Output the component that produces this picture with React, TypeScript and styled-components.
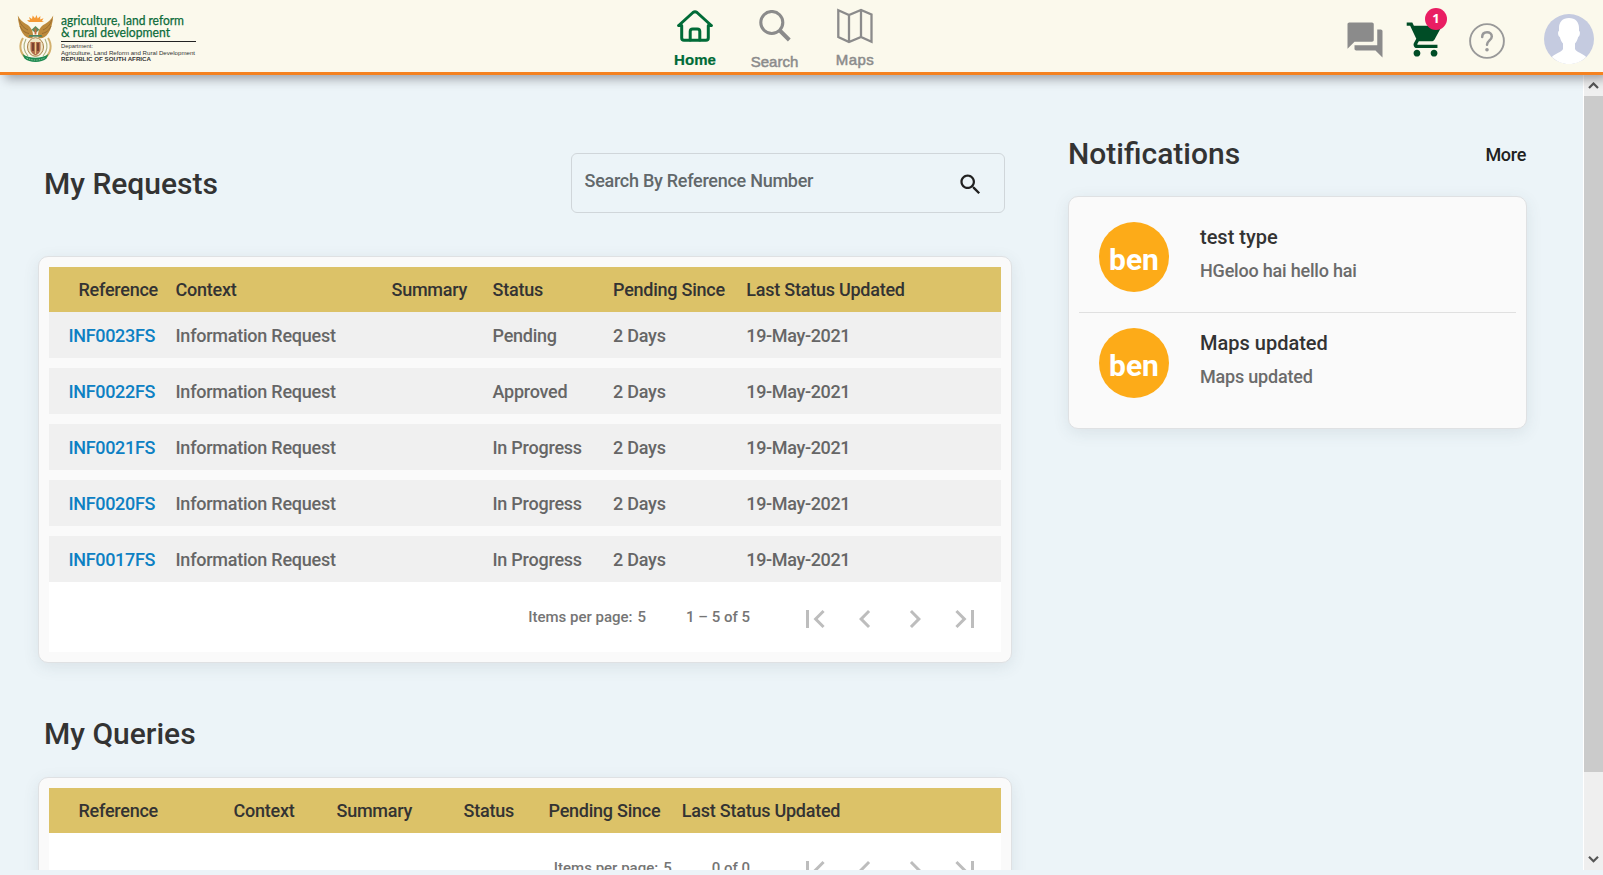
import React from "react";
import styled, { createGlobalStyle } from "styled-components";

const Global = createGlobalStyle`
  * { box-sizing: border-box; }
  body {
    margin: 0;
    overflow: hidden;
    background: #ecf4f8;
    font-family: Roboto, "Liberation Sans", sans-serif;
    font-weight: 500;
    color: #333;
  }
`;

const Page = styled.div`
  height: 875px;
  display: flex;
  flex-direction: column;
  padding-bottom: 5px;
`;

const Header = styled.header`
  position: relative;
  z-index: 2;
  flex: none;
  height: 75px;
  display: grid;
  grid-template-columns: 671px 250px 1fr;
  background: #fbf9ec;
  border-bottom: 3px solid #f58220;
  box-shadow: 5px 4px 10px rgba(40, 40, 50, 0.4);
`;

const Brand = styled.div`
  padding: 14px 0 0 17px;
  display: flex;
  gap: 7px;
`;

const Nav = styled.nav`
  display: flex;
  align-items: flex-start;
`;

const NavItem = styled.a<{ $active?: boolean; $width: number; $top: number; $gap: number; $spacing?: number }>`
  width: ${(p) => p.$width}px;
  padding-top: ${(p) => p.$top}px;
  display: flex;
  flex-direction: column;
  align-items: center;
  gap: ${(p) => p.$gap}px;
  font: ${(p) => (p.$active ? 700 : 400)} 15px/16px "Liberation Sans", sans-serif;
  letter-spacing: ${(p) => p.$spacing ?? 0}px;
  color: ${(p) => (p.$active ? "#006b37" : "#8b8b8b")};
  -webkit-text-stroke: ${(p) => (p.$active ? 0.2 : 0.5)}px currentColor;
`;

const Actions = styled.div`
  display: flex;
  align-items: flex-start;
  justify-content: flex-end;
  padding-right: 9px;
`;

const Action = styled.div<{ $top: number; $gap: number }>`
  position: relative;
  display: flex;
  margin-top: ${(p) => p.$top}px;
  margin-right: ${(p) => p.$gap}px;
`;

const Badge = styled.span`
  position: absolute;
  left: 20px;
  top: -11px;
  width: 22px;
  height: 22px;
  border-radius: 50%;
  background: #e91e63;
  color: #fff;
  text-align: center;
  font: 700 13px/21px "Open Sans", sans-serif;
`;

const Body = styled.div`
  flex: 1;
  min-height: 0;
  display: flex;
`;

const Content = styled.main`
  flex: 1;
  min-width: 0;
  overflow: hidden;
  display: grid;
  grid-template-columns: 974px 459px;
  column-gap: 56px;
  align-items: start;
  padding-left: 38px;
`;

const Column = styled.section<{ $top: number }>`
  display: flex;
  flex-direction: column;
  padding-top: ${(p) => p.$top}px;
`;

const TitleRow = styled.div<{ $height: number; $after: number; $inset?: number }>`
  display: flex;
  align-items: center;
  justify-content: space-between;
  height: ${(p) => p.$height}px;
  margin-bottom: ${(p) => p.$after}px;
  padding-left: ${(p) => p.$inset ?? 0}px;
`;

const Title = styled.h1<{ $drop?: number }>`
  margin: 0;
  padding-top: ${(p) => p.$drop ?? 0}px;
  font-size: 30px;
  line-height: 36px;
  font-weight: 500;
  color: #333;
`;

const More = styled.a`
  padding: 2px 1px 0 0;
  font-size: 18px;
  letter-spacing: -0.3px;
  color: #212121;
`;

const SearchBox = styled.div`
  width: 434px;
  height: 60px;
  margin-right: 7px;
  padding: 0 20px 0 12.500px;
  border: 1px solid #d0d6da;
  border-radius: 6px;
  display: flex;
  align-items: center;
  justify-content: space-between;
  font-size: 18px;
  letter-spacing: -0.27px;
  color: #62686b;
`;

const Placeholder = styled.span`
  padding-bottom: 6px;
`;

const Card = styled.div`
  padding: 10px;
  background: #fafafa;
  border: 1px solid #dfe1e3;
  border-radius: 10px;
  box-shadow: 0 4px 16px rgba(60, 80, 90, 0.1);
`;

const Row = styled.div<{ $columns: string }>`
  display: grid;
  grid-template-columns: ${(p) => p.$columns};
  align-items: center;
  height: 46px;
  background: #f0f0f0;
  font-size: 18px;
  letter-spacing: -0.24px;
  color: #666;
  white-space: nowrap;
  & + & { margin-top: 10px; }
`;

const HeadRow = styled(Row)`
  height: 45px;
  background: #dcc268;
  color: #333;
  & + ${Row} { margin-top: 0; }
`;

const HeadFirst = styled.span`
  padding-left: 29.500px;
`;

const Reference = styled.a`
  padding-left: 19.500px;
  letter-spacing: -0.33px;
  color: #0d80c3;
`;

const DateCell = styled.span`
  letter-spacing: -0.35px;
`;

const PagerBar = styled.div`
  height: 70px;
  display: flex;
  align-items: center;
  justify-content: flex-end;
  padding: 0 18px 0 0;
  background: #fff;
  font-size: 15px;
  line-height: 18px;
  color: #757575;
`;

const PageSize = styled.span`
  display: flex;
  gap: 5px;
  margin-right: 40px;
`;

const PagerIcons = styled.div`
  display: flex;
  gap: 14px;
  margin-left: 47px;
  padding-top: 4px;
`;

const Notice = styled.div`
  display: flex;
  height: 105px;
  padding: 15px 20px 0;
  gap: 31px;
  & + & {
    height: 106px;
    border-top: 1px solid #e0e0e0;
  }
`;

const Initials = styled.div`
  width: 70px;
  height: 70px;
  padding-top: 5px;
  border-radius: 50%;
  background: #fdab18;
  color: #fff;
  text-align: center;
  font: 700 30px/66px Roboto, sans-serif;
`;

const NoticeText = styled.div`
  display: flex;
  flex-direction: column;
  gap: 11px;
  padding-top: 3px;
`;

const NoticeTitle = styled.div`
  font-size: 20px;
  line-height: 24px;
`;

const NoticeBody = styled.div`
  font-size: 18px;
  line-height: 22px;
  letter-spacing: -0.2px;
  color: #6b6b6b;
`;

const Scrollbar = styled.div`
  width: 20px;
  display: flex;
  flex-direction: column;
  background: #efefef;
  border-left: 1px solid #fff;
`;

const ScrollArrow = styled.div<{ $height: number }>`
  height: ${(p) => p.$height}px;
  display: flex;
  align-items: center;
  justify-content: center;
`;

const ScrollThumb = styled.div`
  height: 676px;
  background: #cbcbcb;
`;

const Spacer = styled.div`
  flex: 1;
`;

const Emblem = () => (
  <svg width="37" height="49" viewBox="0 0 37 49">
    <path d="M15.500 24C10 26 2 20 .8 1.500 3 6 6 8 9 10c4 2 7 6 7 11zM21.500 24c5.500 2 13.500-4 14.700-22.500C34 6 31 8 28 10c-4 2-7 6-7 11z" fill="#bd8a3c" />
    <path d="M2 5.500c2 6 5 8.500 9 10.500M3 12c2 5 5 6.500 9 7.500M35 5.500c-2 6-5 8.500-9 10.500M34 12c-2 5-5 6.500-9 7.500" fill="none" stroke="#94692f" strokeWidth=".9" />
    <path d="M12 8l-2-2 3 .2L12 3l3 2 .7-3.500L18 4.200 19.500 1l1.200 3.500L23.400 2l-.3 3.500 3.400-1.200L25 7l2 1z" fill="#f59a36" />
    <path d="M18.500 12l4 3.800-4 3.200-4-3.200z" fill="#5d8a5b" />
    <path d="M18.500 14.500v6" stroke="#c8693c" strokeWidth="1.800" />
    <path d="M12.500 21h12l1 1.800h-14z" fill="#4b8361" />
    <path d="M6 24C1.500 31 3 39 9 44M31 24c4.500 7 3 15-3 20" fill="none" stroke="#d3b06c" strokeWidth="2" />
    <path d="M9 25c-3.500 7-2.500 12 2 17M28 25c3.500 7 2.500 12-2 17" fill="none" stroke="#a9ad7c" strokeWidth="1.100" />
    <ellipse cx="18.500" cy="33" rx="8" ry="9.300" fill="#f0e6c6" stroke="#a98046" strokeWidth="1" />
    <path d="M13.500 28h10v7c0 3.500-3 5.500-5 6.500-2-1-5-3-5-6.500z" fill="#b06a4a" />
    <path d="M16 29v8M21 29v8" stroke="#6b3a28" strokeWidth="1.600" />
    <path d="M18.500 28v12" stroke="#ecca84" strokeWidth="1.200" />
    <path d="M5.500 40c7 5 19 5 26 0l-2 4.500C25 49 12 49 7.500 44.500z" fill="#1d8a50" />
    <path d="M9.500 44c6 2.800 12 2.800 18 0" fill="none" stroke="#b9d6ba" strokeWidth=".7" strokeDasharray="1.500 1" />
  </svg>
);

const Wordmark = () => (
  <svg width="136" height="52" viewBox="0 0 136 52" fontFamily='"Liberation Sans", sans-serif'>
    <g fontFamily="Lato, sans-serif" fontSize="13" fontWeight="400" fill="#0b6b3a" stroke="#0b6b3a" strokeWidth=".25">
      <text x="0" y="11" textLength="123" lengthAdjust="spacingAndGlyphs">agriculture, land reform</text>
      <text x="0" y="23" textLength="109" lengthAdjust="spacingAndGlyphs">&amp; rural development</text>
    </g>
    <path d="M0 27.500h135" stroke="#222" strokeWidth="1" />
    <g fontSize="6" fill="#333">
      <text x="0" y="34.300" textLength="32" lengthAdjust="spacingAndGlyphs">Department:</text>
      <text x="0" y="40.800" textLength="134" lengthAdjust="spacingAndGlyphs">Agriculture, Land Reform and Rural Development</text>
      <text x="0" y="47.300" fontWeight="700" textLength="90" lengthAdjust="spacingAndGlyphs">REPUBLIC OF SOUTH AFRICA</text>
    </g>
  </svg>
);

const HomeIcon = () => (
  <svg width="36" height="32" viewBox="0 0 36 32" fill="none" stroke="#006b37" strokeWidth="3" strokeLinecap="round" strokeLinejoin="round">
    <path d="M1.700 15.500L16 2.500q2-1.500 4 0L34.300 15.500" />
    <path d="M2 15.500h2.700V28q0 2.300 2.300 2.300h22q2.300 0 2.300-2.300V15.500H34" />
    <path d="M13.200 30V21.500q0-2.500 2.500-2.500h4.600q2.500 0 2.500 2.500V30" />
  </svg>
);

const SearchIcon = () => (
  <svg width="32" height="32" viewBox="0 0 32 32" fill="none" stroke="#8b8b8b">
    <circle cx="12.800" cy="12.500" r="11" strokeWidth="3.100" />
    <path d="M20.800 20.500L30.300 30" strokeWidth="4" />
  </svg>
);

const MapsIcon = () => (
  <svg width="36" height="36" viewBox="0 0 36 36" fill="none" stroke="#8b8b8b" strokeWidth="2.300">
    <path d="M1.300 2.300L12 7l12-5 10.500 4.500v27.200L24 29l-12 5-10.700-5zM12 7v27M24 2v27" />
  </svg>
);

const ForumIcon = () => (
  <svg width="42" height="42" viewBox="0 0 24 24" fill="#8b8b8b">
    <path d="M21 6h-2v9H6v2c0 .55.45 1 1 1h11l4 4V7c0-.55-.45-1-1-1zm-4 6V3c0-.55-.45-1-1-1H3c-.55 0-1 .45-1 1v14l4-4h10c.55 0 1-.45 1-1z" />
  </svg>
);

const CartIcon = () => (
  <svg width="41" height="41" viewBox="0 0 24 24" fill="#004d26">
    <path d="M7 18c-1.100 0-1.990.9-1.990 2S5.900 22 7 22s2-.9 2-2-.9-2-2-2zM1 2v2h2l3.600 7.590-1.350 2.450c-.16.28-.25.61-.25.96 0 1.100.9 2 2 2h12v-2H7.420c-.14 0-.25-.11-.25-.25l.03-.12.9-1.630h7.450c.75 0 1.410-.41 1.750-1.030l3.580-6.490c.08-.14.12-.31.12-.48 0-.55-.45-1-1-1H5.210l-.94-2H1zm16 16c-1.100 0-1.990.9-1.990 2s.89 2 1.990 2 2-.9 2-2-.9-2-2-2z" />
  </svg>
);

const HelpIcon = () => (
  <svg width="36" height="36" viewBox="0 0 36 36" fill="none" stroke="#999">
    <circle cx="18" cy="18" r="16.900" strokeWidth="1.900" />
    <path d="M13.200 14c0-3.200 2-4.800 4.800-4.800s4.800 1.700 4.800 4.300c0 3.800-4.800 4.100-4.800 8.300" strokeWidth="2.500" strokeLinecap="round" />
    <circle cx="18" cy="26.800" r="1.800" fill="#999" stroke="none" />
  </svg>
);

const AvatarIcon = () => (
  <svg width="50" height="50" viewBox="0 0 50 50">
    <circle cx="25" cy="25" r="25" fill="#c5cbe0" />
    <path d="M25 4c-6.500 0-10 4-10 10v3c-1.500 0-1.200 5 .8 6 .8 3 1.700 5 3.200 6.500V35c-1 3-8 4.500-11.200 8C13 47.500 18.500 50 25 50s12.500-2.500 17.200-7C39 39.500 32 38 31 35v-5.500c1.500-1.500 2.400-3.500 3.200-6.500 2-1 2.300-6 .8-6v-3c0-6-3.500-10-10-10z" fill="#fff" />
  </svg>
);

const MagnifierIcon = () => (
  <svg width="27" height="29" viewBox="0 -1.800 24 25.800" fill="#212121">
    <path d="M15.500 14h-.79l-.28-.27C15.410 12.590 16 11.110 16 9.500 16 5.910 13.090 3 9.500 3S3 5.910 3 9.500 5.910 16 9.500 16c1.610 0 3.090-.59 4.230-1.570l.27.28v.79l5 4.990L20.490 19l-4.990-5zm-6 0C7.010 14 5 11.990 5 9.500S7.010 5 9.500 5 14 7.010 14 9.500 11.990 14 9.500 14z" />
  </svg>
);

const pagerPaths = [
  "M18.410 16.590L13.820 12l4.590-4.590L17 6l-6 6 6 6zM6 6h2v12H6z",
  "M15.410 7.410L14 6l-6 6 6 6 1.410-1.410L10.830 12z",
  "M10 6L8.590 7.410 13.170 12l-4.580 4.590L10 18l6-6z",
  "M5.590 7.410L10.180 12l-4.590 4.590L7 18l6-6-6-6zM16 6h2v12h-2z",
];

const Pager = ({ range }: { range: string }) => (
  <PagerBar>
    <PageSize>
      <span>Items per page:</span>
      <span>5</span>
    </PageSize>
    <span>{range}</span>
    <PagerIcons>
      {pagerPaths.map((d) => (
        <svg key={d} width="36" height="36" viewBox="0 0 24 24" fill="#bdbdbd">
          <path d={d} />
        </svg>
      ))}
    </PagerIcons>
  </PagerBar>
);

const Chevron = ({ down }: { down?: boolean }) => (
  <svg width="11" height="8" viewBox="0 0 11 8" fill="none" stroke="#555" strokeWidth="2.200">
    <path d={down ? "M1 1.800l4.500 4.500L10 1.800" : "M1 6L5.500 1.500 10 6"} />
  </svg>
);

const headings = ["Context", "Summary", "Status", "Pending Since", "Last Status Updated"];

const TableHead = ({ columns }: { columns: string }) => (
  <HeadRow $columns={columns}>
    <HeadFirst>Reference</HeadFirst>
    {headings.map((h) => (
      <span key={h}>{h}</span>
    ))}
  </HeadRow>
);

const requestColumns = "126.500px 216px 101px 120.500px 133.300px 1fr";
const queryColumns = "184.500px 103px 127px 85px 133.300px 1fr";

const requests = [
  ["INF0023FS", "Pending"],
  ["INF0022FS", "Approved"],
  ["INF0021FS", "In Progress"],
  ["INF0020FS", "In Progress"],
  ["INF0017FS", "In Progress"],
];

const notices = [
  ["test type", "HGeloo hai hello hai"],
  ["Maps updated", "Maps updated"],
];

export default function App() {
  return (
    <Page>
      <Global />
      <Header>
        <Brand>
          <Emblem />
          <Wordmark />
        </Brand>
        <Nav>
          <NavItem $active $width={48} $top={10} $gap={10} $spacing={0.1}>
            <HomeIcon />
            Home
          </NavItem>
          <NavItem $width={111} $top={10} $gap={12}>
            <SearchIcon />
            Search
          </NavItem>
          <NavItem $width={50} $top={8} $gap={8} $spacing={0.5}>
            <MapsIcon />
            Maps
          </NavItem>
        </Nav>
        <Actions>
          <Action $top={19} $gap={19}>
            <ForumIcon />
          </Action>
          <Action $top={19} $gap={23}>
            <CartIcon />
            <Badge>1</Badge>
          </Action>
          <Action $top={23} $gap={39}>
            <HelpIcon />
          </Action>
          <Action $top={14} $gap={0}>
            <AvatarIcon />
          </Action>
        </Actions>
      </Header>
      <Body>
        <Content>
          <Column $top={78}>
            <TitleRow $height={60} $after={43} $inset={6}>
              <Title $drop={2}>My Requests</Title>
              <SearchBox>
                <Placeholder>Search By Reference Number</Placeholder>
                <MagnifierIcon />
              </SearchBox>
            </TitleRow>
            <Card>
              <TableHead columns={requestColumns} />
              {requests.map(([id, status]) => (
                <Row key={id} $columns={requestColumns}>
                  <Reference>{id}</Reference>
                  <span>Information Request</span>
                  <span />
                  <span>{status}</span>
                  <span>2 Days</span>
                  <DateCell>19-May-2021</DateCell>
                </Row>
              ))}
              <Pager range="1 – 5 of 5" />
            </Card>
            <TitleRow $height={114} $after={0} $inset={6}>
              <Title $drop={28}>My Queries</Title>
            </TitleRow>
            <Card>
              <TableHead columns={queryColumns} />
              <Pager range="0 of 0" />
            </Card>
          </Column>
          <Column $top={60}>
            <TitleRow $height={37} $after={24}>
              <Title>Notifications</Title>
              <More>More</More>
            </TitleRow>
            <Card>
              {notices.map(([title, body]) => (
                <Notice key={title}>
                  <Initials>ben</Initials>
                  <NoticeText>
                    <NoticeTitle>{title}</NoticeTitle>
                    <NoticeBody>{body}</NoticeBody>
                  </NoticeText>
                </Notice>
              ))}
            </Card>
          </Column>
        </Content>
        <Scrollbar>
          <ScrollArrow $height={21}>
            <Chevron />
          </ScrollArrow>
          <ScrollThumb />
          <Spacer />
          <ScrollArrow $height={22}>
            <Chevron down />
          </ScrollArrow>
        </Scrollbar>
      </Body>
    </Page>
  );
}
